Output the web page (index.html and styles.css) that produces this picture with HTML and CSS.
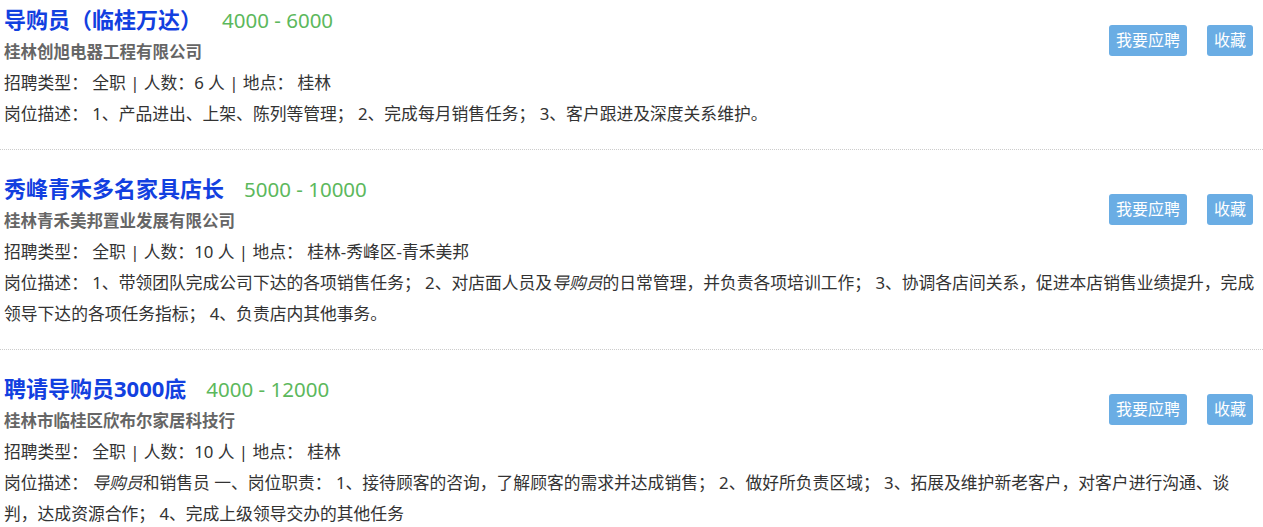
FILE: index.html
```html
<!DOCTYPE html>
<html>
<head>
  <meta charset="utf-8">
  <meta name="viewport" content="width=device-width, initial-scale=1">
  <link rel="stylesheet" href="styles.css">
</head>
<body>

  <!-- Job list -->
  <div class="job-list">

    <!-- Job 1 -->
    <div class="job-item">
      <div class="job-actions">
        <a class="btn" href="#">我要应聘</a>
        <a class="btn" href="#">收藏</a>
      </div>
      <h2 class="job-title">导购员（临桂万达）<span class="salary">4000 - 6000</span></h2>
      <p class="company">桂林创旭电器工程有限公司</p>
      <p class="meta">招聘类型： 全职 | 人数：6 人 | 地点： 桂林</p>
      <p class="desc">岗位描述： 1、产品进出、上架、陈列等管理； 2、完成每月销售任务； 3、客户跟进及深度关系维护。</p>
    </div>

    <!-- Job 2 -->
    <div class="job-item">
      <div class="job-actions">
        <a class="btn" href="#">我要应聘</a>
        <a class="btn" href="#">收藏</a>
      </div>
      <h2 class="job-title">秀峰青禾多名家具店长<span class="salary">5000 - 10000</span></h2>
      <p class="company">桂林青禾美邦置业发展有限公司</p>
      <p class="meta">招聘类型： 全职 | 人数：10 人 | 地点： 桂林-秀峰区-青禾美邦</p>
      <p class="desc">岗位描述： 1、带领团队完成公司下达的各项销售任务； 2、对店面人员及<em>导购员</em>的日常管理，并负责各项培训工作； 3、协调各店间关系，促进本店销售业绩提升，完成领导下达的各项任务指标； 4、负责店内其他事务。</p>
    </div>

    <!-- Job 3 -->
    <div class="job-item">
      <div class="job-actions">
        <a class="btn" href="#">我要应聘</a>
        <a class="btn" href="#">收藏</a>
      </div>
      <h2 class="job-title">聘请导购员3000底<span class="salary">4000 - 12000</span></h2>
      <p class="company">桂林市临桂区欣布尔家居科技行</p>
      <p class="meta">招聘类型： 全职 | 人数：10 人 | 地点： 桂林</p>
      <p class="desc">岗位描述： <em>导购员</em>和销售员 一、岗位职责： 1、接待顾客的咨询，了解顾客的需求并达成销售； 2、做好所负责区域； 3、拓展及维护新老客户，对客户进行沟通、谈判，达成资源合作； 4、完成上级领导交办的其他任务</p>
    </div>

  </div>

</body>
</html>
```

FILE: styles.css
```css
/* =====================
   BASIC
   ===================== */
body {
  margin: 0;
  background: #fff;
  color: #333;
  font-family: "Noto Sans", "Noto Sans CJK SC", sans-serif;
  font-size: 16.8px;
}
h2, p {
  margin: 0;
  padding: 0;
}

/* =====================
   JOB LIST
   ===================== */
.job-item {
  padding: 22px 4px 20px;
  border-bottom: 1px dotted #ccc;
}
.job-item:first-child {
  padding-top: 3px;
}
.job-item:last-child {
  border-bottom: none;
}

.job-title {
  font-size: 22px;
  font-weight: 700;
  line-height: 32px;
  color: #1240e0;
}
.salary {
  margin-left: 20px;
  font-size: 20.5px;
  font-weight: 400;
  color: #5cb85c;
}
.company {
  margin-top: 1px;
  font-size: 16.5px;
  font-weight: 700;
  line-height: 30px;
  color: #666;
}
.meta, .desc {
  line-height: 31px;
}
.desc em {
  font-style: italic;
}

/* =====================
   BUTTONS
   ===================== */
.job-actions {
  float: right;
  margin: 22px 6px 0 20px;
  display: flex;
  gap: 20px;
}
.btn {
  display: block;
  height: 31px;
  line-height: 31px;
  padding: 0 7px;
  background: #6aade4;
  color: #fff;
  font-size: 16px;
  text-decoration: none;
  border-radius: 3px;
}
```
